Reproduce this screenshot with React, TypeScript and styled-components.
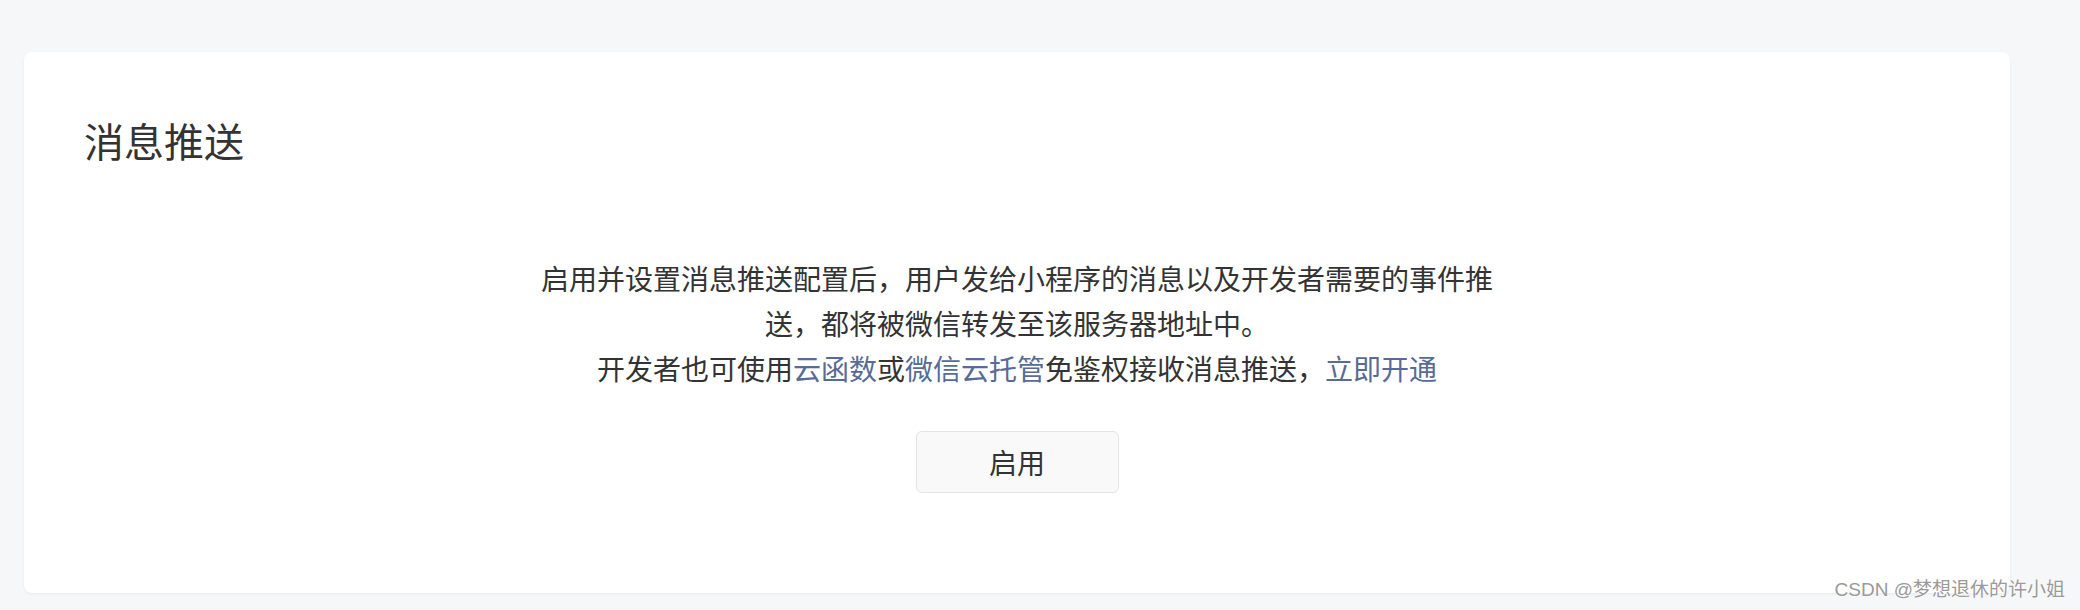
import React from 'react';
import styled, { createGlobalStyle } from 'styled-components';

const GlobalStyle = createGlobalStyle`
  * {
    box-sizing: border-box;
  }
  body {
    margin: 0;
    background: #f6f7f9;
    font-family: "Noto Sans CJK SC", "Noto Sans", sans-serif;
    color: #353535;
  }
`;

const Page = styled.div`
  position: relative;
  min-height: 610px;
  padding: 52px 70px 17px 24px;
`;

const Card = styled.section`
  background: #fff;
  border-radius: 8px;
  box-shadow: 0 1px 3px rgba(0, 0, 0, 0.06);
  padding: 60px 60px 100px;
`;

const Title = styled.h2`
  margin: 0;
  font-size: 40px;
  line-height: 56px;
  font-weight: 400;
  color: #333;
`;

const Content = styled.div`
  margin-top: 88px;
  display: flex;
  flex-direction: column;
  align-items: center;
`;

const Desc = styled.p`
  margin: 0;
  max-width: 960px;
  font-size: 28px;
  line-height: 1.6;
  text-align: center;
  color: #333;
`;

const Link = styled.a`
  color: #576b95;
  text-decoration: none;
  cursor: pointer;
`;

const EnableButton = styled.button`
  margin-top: 41px;
  width: 203px;
  height: 62px;
  border: 1px solid #e2e4e8;
  border-radius: 6px;
  background: #f9f9f9;
  font-family: inherit;
  font-size: 28px;
  color: #333;
  cursor: pointer;
`;

const Watermark = styled.span`
  position: absolute;
  right: 15px;
  bottom: 11px;
  font-family: "Liberation Sans", "Noto Sans CJK SC", sans-serif;
  font-size: 19px;
  line-height: 1;
  color: #9a9a9a;
  text-shadow: 0 0 2px #fff, 0 0 1px #fff;
  pointer-events: none;
`;

export default function App() {
  return (
    <>
      <GlobalStyle />
      <Page>
        <Card>
          <Title>消息推送</Title>
          <Content>
            <Desc>
              启用并设置消息推送配置后，用户发给小程序的消息以及开发者需要的事件推送，都将被微信转发至该服务器地址中。
            </Desc>
            <Desc>
              开发者也可使用<Link>云函数</Link>或<Link>微信云托管</Link>免鉴权接收消息推送，<Link>立即开通</Link>
            </Desc>
            <EnableButton type="button">启用</EnableButton>
          </Content>
        </Card>
        <Watermark>CSDN @梦想退休的许小姐</Watermark>
      </Page>
    </>
  );
}
